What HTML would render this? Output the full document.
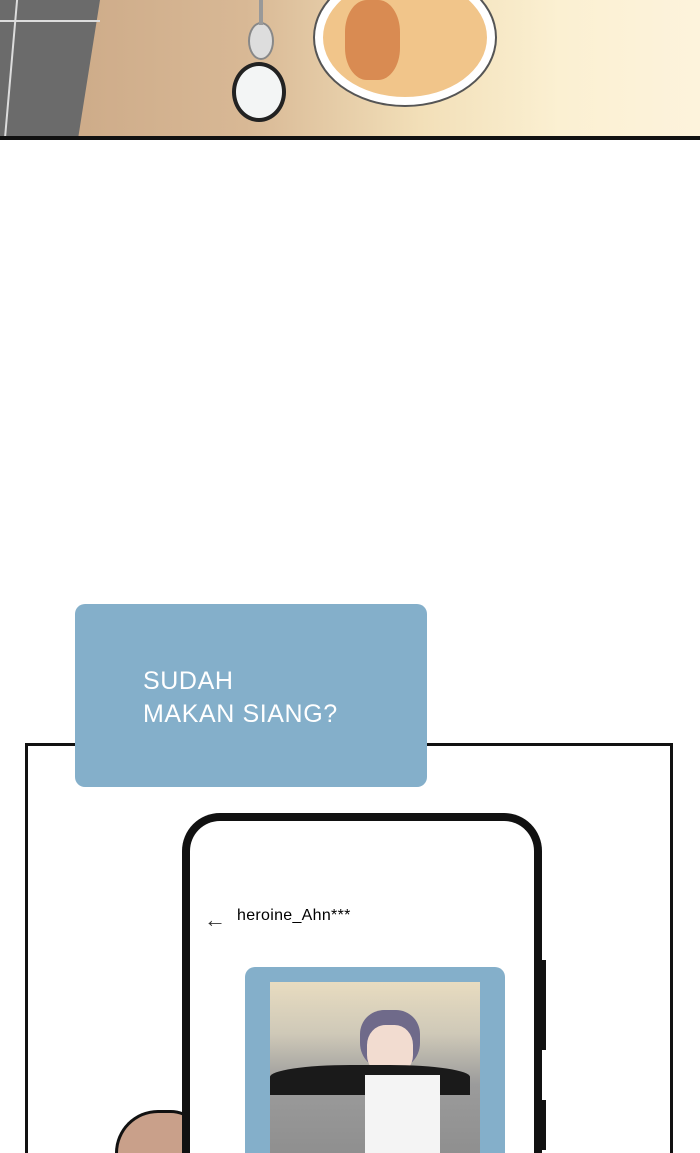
<!DOCTYPE html>
<html style="overflow:hidden;height:1153px"><head><style>
html,body{margin:0;width:700px;height:1153px;overflow:hidden}
body{position:relative;background:#fff;font-family:"Liberation Sans",sans-serif}
div{position:absolute;box-sizing:border-box}
</style></head><body>
<div style="left:0;top:0;width:700px;height:1153px;overflow:hidden">
<div style="left:0;top:0;width:700px;height:139px;background:linear-gradient(90deg,#c9a684 0%,#d8b895 35%,#f2dfb8 60%,#fbf0d2 80%,#fdf3dc 100%)"></div>
<div style="left:0;top:0;width:100px;height:139px;background:#6b6b6b;clip-path:polygon(0 0,100px 0,78px 139px,0 139px)"></div>
<div style="left:10px;top:0;width:2px;height:139px;background:#ddd;transform:skewX(-5deg)"></div>
<div style="left:0;top:20px;width:100px;height:2px;background:#ddd"></div>
<div style="left:232px;top:62px;width:54px;height:60px;border:4px solid #222;border-radius:50%;background:#f3f5f5"></div>
<div style="left:248px;top:22px;width:26px;height:38px;border-radius:50%;background:#ddd;border:2px solid #888"></div>
<div style="left:259px;top:0;width:4px;height:25px;background:#999"></div>
<div style="left:315px;top:-30px;width:180px;height:135px;border-radius:50%;background:#f1c58a;border:8px solid #fff;box-shadow:0 0 0 2px #555"></div>
<div style="left:345px;top:0;width:55px;height:80px;background:#d98b52;border-radius:40%"></div>
<div style="left:0;top:136px;width:700px;height:4px;background:#111"></div>
<div style="left:25px;top:743px;width:648px;height:410px;border:3px solid #111;border-bottom:none"></div>
<div style="left:75px;top:604px;width:352px;height:183px;background:#84afca;border-radius:10px"></div>
<div style="left:143px;top:665px;color:#fff;font-size:25px;line-height:33px;letter-spacing:0.6px">SUDAH<br>MAKAN SIANG?</div>
<div style="left:115px;top:1110px;width:90px;height:43px;background:#c9a08a;border:3px solid #111;border-bottom:none;border-radius:45px 36px 0 0"></div>
<div style="left:182px;top:813px;width:360px;height:340px;border:8px solid #111;border-bottom:none;border-radius:38px 38px 0 0;background:#fff"></div>
<div style="left:540px;top:960px;width:6px;height:90px;background:#111"></div>
<div style="left:540px;top:1100px;width:6px;height:50px;background:#111"></div>
<div style="left:204px;top:907px;font-size:22px;color:#333">←</div>
<div style="left:237px;top:907px;font-size:16px;color:#000;letter-spacing:0.3px">heroine_Ahn***</div>
<div style="left:245px;top:967px;width:260px;height:186px;background:#84afca;border-radius:10px 10px 0 0"></div>
<div style="left:270px;top:982px;width:210px;height:171px;background:linear-gradient(180deg,#e8dcc0 0%,#cfc9b8 30%,#9b9b9b 60%,#8f8f8f 100%)"></div>
<div style="left:360px;top:1010px;width:60px;height:60px;border-radius:40% 40% 45% 45%;background:#6f6a8a"></div>
<div style="left:367px;top:1025px;width:46px;height:50px;border-radius:40%;background:#f2dcd0"></div>
<div style="left:270px;top:1065px;width:200px;height:30px;background:#1a1a1a;border-radius:40% 40% 0 0"></div>
<div style="left:365px;top:1075px;width:75px;height:78px;background:#f4f4f4"></div>
</div>
</body></html>
